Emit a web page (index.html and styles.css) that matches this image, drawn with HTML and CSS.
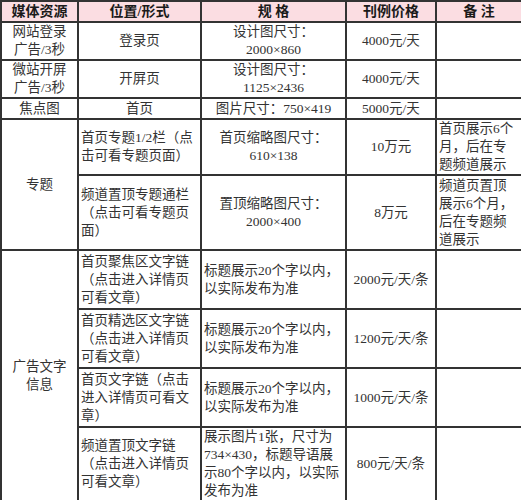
FILE: index.html
```html
<!DOCTYPE html>
<html lang="zh-CN">
<head>
<meta charset="utf-8">
<title>广告刊例</title>
<link rel="stylesheet" href="styles.css">
</head>
<body>
<table class="rate">
  <colgroup>
    <col class="c1"><col class="c2"><col class="c3"><col class="c4"><col class="c5">
  </colgroup>
  <thead>
    <tr class="h-head">
      <th>媒体资源</th><th>位置/形式</th><th>规&nbsp;格</th><th>刊例价格</th><th>备&nbsp;注</th>
    </tr>
  </thead>
  <tbody>
    <tr class="h38">
      <td class="ctr">网站登录<br>广告/3秒</td>
      <td class="ctr">登录页</td>
      <td class="ctr">设计图尺寸：<br>2000×860</td>
      <td class="ctr">4000元/天</td>
      <td></td>
    </tr>
    <tr class="h38">
      <td class="ctr">微站开屏<br>广告/3秒</td>
      <td class="ctr">开屏页</td>
      <td class="ctr">设计图尺寸：<br>1125×2436</td>
      <td class="ctr">4000元/天</td>
      <td></td>
    </tr>
    <tr class="h21">
      <td class="ctr">焦点图</td>
      <td class="ctr">首页</td>
      <td class="ctr">图片尺寸：750×419</td>
      <td class="ctr">5000元/天</td>
      <td></td>
    </tr>
    <tr class="h55">
      <td class="ctr" rowspan="2">专题</td>
      <td class="lft">首页专题1/2栏（点<br>击可看专题页面）</td>
      <td class="ctr">首页缩略图尺寸：<br>610×138</td>
      <td class="ctr">10万元</td>
      <td class="lft">首页展示6个<br>月，后在专<br>题频道展示</td>
    </tr>
    <tr class="h75">
      <td class="lft">频道置顶专题通栏<br>（点击可看专题页<br>面）</td>
      <td class="ctr">置顶缩略图尺寸：<br>2000×400</td>
      <td class="ctr">8万元</td>
      <td class="lft">频道页置顶<br>展示6个月，<br>后在专题频<br>道展示</td>
    </tr>
    <tr class="h59">
      <td class="ctr" rowspan="4">广告文字<br>信息</td>
      <td class="lft">首页聚焦区文字链<br>（点击进入详情页<br>可看文章）</td>
      <td class="lft">标题展示20个字以内，<br>以实际发布为准</td>
      <td class="ctr">2000元/天/条</td>
      <td></td>
    </tr>
    <tr class="h59">
      <td class="lft">首页精选区文字链<br>（点击进入详情页<br>可看文章）</td>
      <td class="lft">标题展示20个字以内，<br>以实际发布为准</td>
      <td class="ctr">1200元/天/条</td>
      <td></td>
    </tr>
    <tr class="h59">
      <td class="lft">首页文字链（点击<br>进入详情页可看文<br>章）</td>
      <td class="lft">标题展示20个字以内，<br>以实际发布为准</td>
      <td class="ctr">1000元/天/条</td>
      <td></td>
    </tr>
    <tr class="h73">
      <td class="lft">频道置顶文字链<br>（点击进入详情页<br>可看文章）</td>
      <td class="lft">展示图片1张，尺寸为<br>734×430，标题导语展<br>示80个字以内，以实际<br>发布为准</td>
      <td class="ctr">800元/天/条</td>
      <td></td>
    </tr>
  </tbody>
</table>
</body>
</html>
```
FILE: styles.css
```css
html, body {
  margin: 0;
  padding: 0;
  background: #ffffff;
}

.rate {
  width: 521px;
  border-collapse: collapse;
  table-layout: fixed;
  font-family: "Liberation Serif", "Noto Sans CJK SC", serif;
  font-size: 13.5px;
  line-height: 18px;
  color: #333333;
}

.c1 { width: 77px; }
.c2 { width: 123px; }
.c3 { width: 145px; }
.c4 { width: 90px; }
.c5 { width: 86px; }

.rate th,
.rate td {
  border: 2px solid #333333;
  padding: 0 2px;
  vertical-align: middle;
  white-space: nowrap;
  overflow: hidden;
}

.rate th {
  background: #fbdde2;
  font-weight: bold;
  font-size: 14px;
  color: #1a1a1a;
  text-align: center;
}

.ctr { text-align: center; }
.lft { text-align: left; }

.h-head { height: 21px; }
.h21 { height: 21px; }
.h38 { height: 38px; }
.h55 { height: 55px; }
.h59 { height: 59px; }
.h73 { height: 73px; }
.h75 { height: 75px; }
```
